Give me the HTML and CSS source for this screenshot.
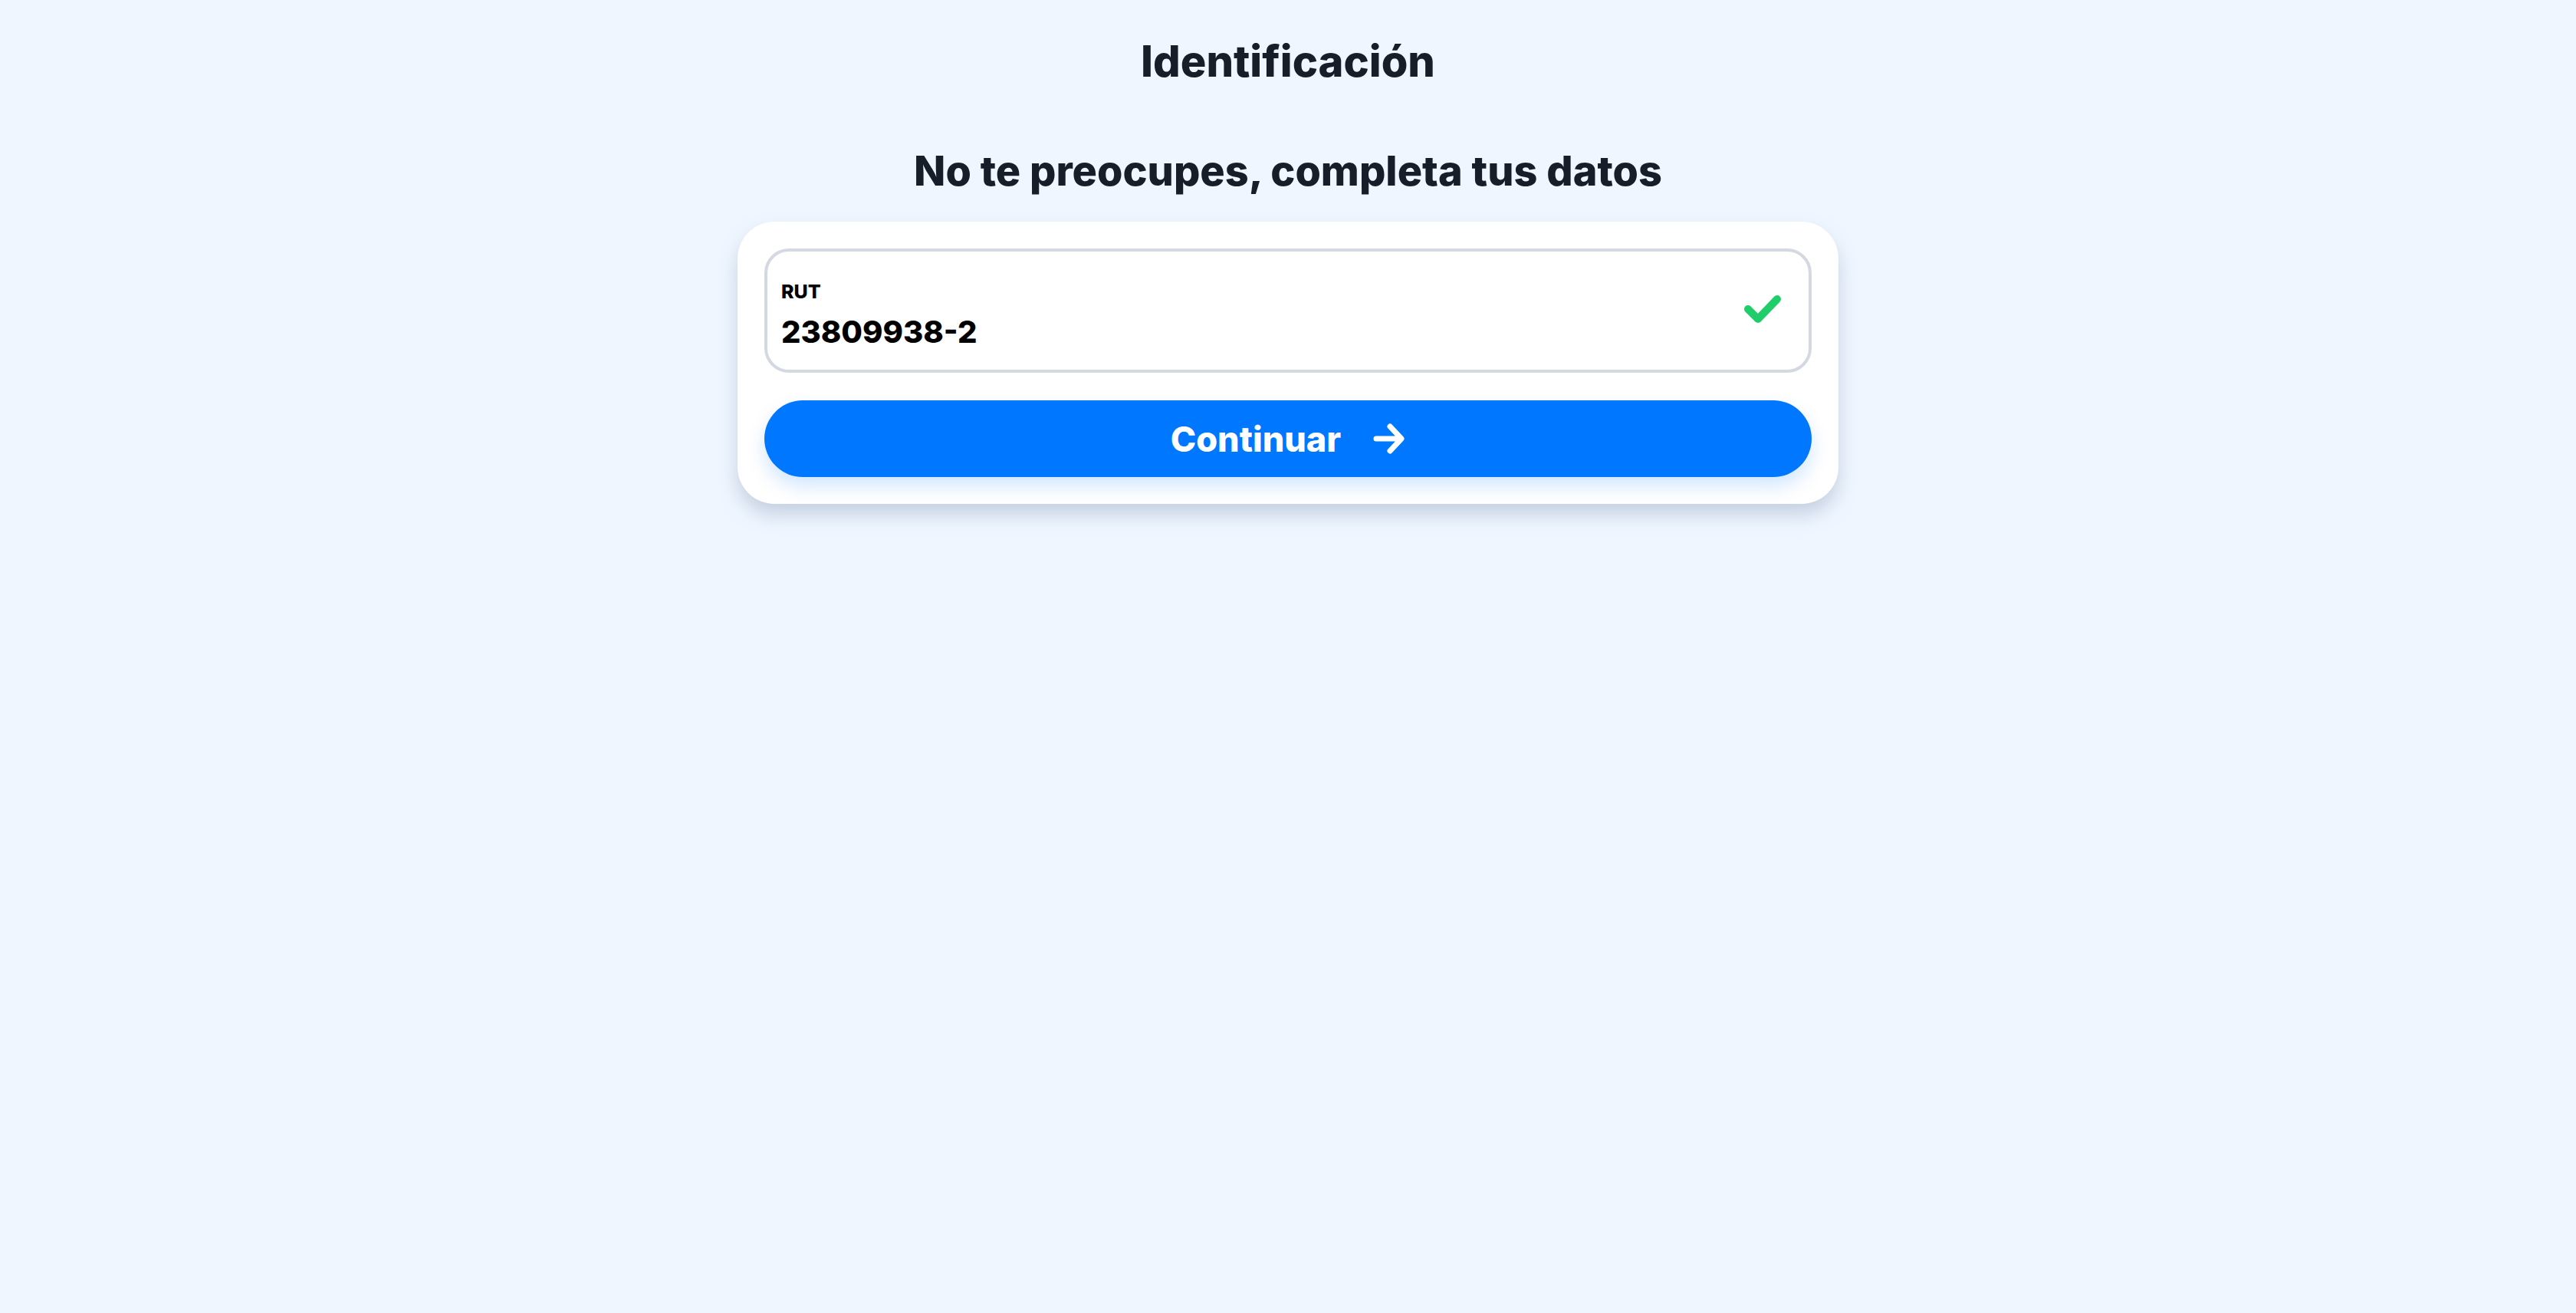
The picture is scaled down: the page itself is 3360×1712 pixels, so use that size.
FILE: index.html
```html
<!DOCTYPE html>
<html lang="es">
<head>
<meta charset="utf-8">
<title>Identificación</title>
<link rel="stylesheet" href="styles.css">
</head>
<body>
<main class="page">
  <h1 class="title">Identificación</h1>
  <h2 class="subtitle">No te preocupes, completa tus datos</h2>
  <section class="card">
    <div class="field">
      <div class="field-text">
        <span class="field-label">RUT</span>
        <span class="field-value">23809938-2</span>
      </div>
      <svg class="check" width="48" height="36" viewBox="0 0 48 36" aria-hidden="true">
        <path d="M5 18 L18 31 L43 5" fill="none" stroke="#1fcd69" stroke-width="10" stroke-linecap="round" stroke-linejoin="round"/>
      </svg>
    </div>
    <button class="btn" type="button">
      <span>Continuar</span>
      <svg class="arrow" width="42" height="42" viewBox="0 0 42 42" aria-hidden="true">
        <path d="M4 21 H36 M22 5 L37 21 L22 37" fill="none" stroke="#ffffff" stroke-width="7" stroke-linecap="round" stroke-linejoin="round"/>
      </svg>
    </button>
  </section>
</main>
</body>
</html>
```

FILE: styles.css
```css
html, body {
  margin: 0;
  padding: 0;
}
body {
  background: #eff6ff;
  font-family: "Inter", "Noto Sans", sans-serif;
  color: #161e29;
  min-height: 1712px;
}
.page {
  display: flex;
  flex-direction: column;
  align-items: center;
  padding-top: 46px;
}
.title {
  margin: 0;
  font-size: 56px;
  font-weight: 800;
  line-height: 68px;
  letter-spacing: 0;
}
.subtitle {
  margin: 76px 0 0;
  font-size: 54px;
  font-weight: 800;
  line-height: 66px;
  letter-spacing: 0;
}
.card {
  margin-top: 33px;
  width: 1436px;
  box-sizing: border-box;
  padding: 35px;
  background: #ffffff;
  border-radius: 48px;
  box-shadow: 0 14px 24px rgba(120, 140, 170, 0.35);
  display: flex;
  flex-direction: column;
  gap: 36px;
}
.field {
  height: 162px;
  box-sizing: border-box;
  border: 4px solid #d4d8e0;
  border-radius: 32px;
  padding: 0 36px 0 18px;
  display: flex;
  align-items: center;
  justify-content: space-between;
}
.field-text {
  display: flex;
  flex-direction: column;
  gap: 14px;
  margin-top: 12px;
  color: #000000;
}
.field-label {
  font-size: 25px;
  font-weight: 800;
  line-height: 30px;
}
.field-value {
  font-size: 40px;
  font-weight: 800;
  line-height: 48px;
}
.check {
  display: block;
  margin-top: -4px;
}
.btn {
  height: 100px;
  border: none;
  border-radius: 50px;
  background: #0077ff;
  color: #ffffff;
  font-family: inherit;
  font-size: 45px;
  font-weight: 800;
  display: flex;
  align-items: center;
  justify-content: center;
  gap: 42px;
  box-shadow: 0 12px 24px rgba(0, 119, 255, 0.18);
  padding: 0;
}
.arrow {
  display: block;
}
```
